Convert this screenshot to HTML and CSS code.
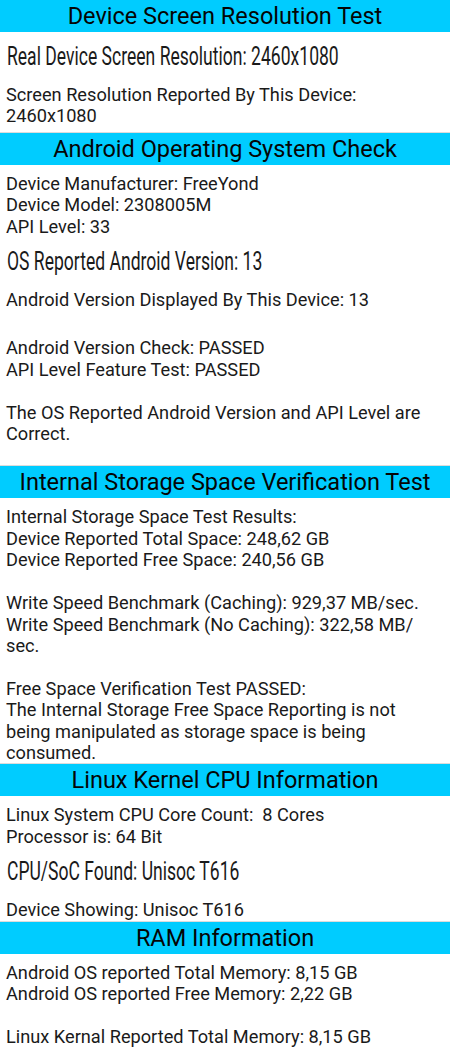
FILE: index.html
```html
<!DOCTYPE html>
<html>
<head>
<title>Device Info</title>
<link rel="stylesheet" href="styles.css">
</head>
<body>
<section class="block first">
    <h2 class="bar">Device Screen Resolution Test</h2>
    <p class="big"><span>Real Device Screen Resolution: 2460x1080</span></p>
    <p class="info shortend">Screen Resolution Reported By This Device:<br>2460x1080</p>
</section>

<section class="block">
    <h2 class="bar">Android Operating System Check</h2>
    <p class="info">Device Manufacturer: FreeYond<br>Device Model: 2308005M<br>API Level: 33</p>
    <p class="big"><span>OS Reported Android Version: 13</span></p>
    <p class="info">Android Version Displayed By This Device: 13</p>
    <p class="info spaced tail">Android Version Check: PASSED<br>API Level Feature Test: PASSED<br><br>The OS Reported Android Version and API Level are<br>Correct.</p>
</section>

<section class="block">
    <h2 class="bar">Internal Storage Space Verification Test</h2>
    <p class="info">Internal Storage Space Test Results:<br>Device Reported Total Space: 248,62 GB<br>Device Reported Free Space: 240,56 GB<br><br>Write Speed Benchmark (Caching): 929,37 MB/sec.<br>Write Speed Benchmark (No Caching): 322,58 MB/<br>sec.<br><br>Free Space Verification Test PASSED:<br>The Internal Storage Free Space Reporting is not<br>being manipulated as storage space is being<br>consumed.</p>
</section>

<section class="block">
    <h2 class="bar">Linux Kernel CPU Information</h2>
    <p class="info">Linux System CPU Core Count:&nbsp; 8 Cores<br>Processor is: 64 Bit</p>
    <p class="big"><span>CPU/SoC Found: Unisoc T616</span></p>
    <p class="info">Device Showing: Unisoc T616</p>
</section>

<section class="block">
    <h2 class="bar">RAM Information</h2>
    <p class="info">Android OS reported Total Memory: 8,15 GB<br>Android OS reported Free Memory: 2,22 GB<br><br>Linux Kernal Reported Total Memory: 8,15 GB</p>
</section>
</body>
</html>
```

FILE: styles.css
```css
body {
  margin: 0;
  background: #ffffff;
  font-family: Roboto, "Noto Sans", sans-serif;
  color: #1a1a1a;
  overflow: hidden;
}

.block {
  border-top: 1px solid #dcdcdc;
}
.block.first {
  border-top: none;
}

.bar {
  margin: 0;
  height: 32px;
  line-height: 32px;
  background-color: #00ccff;
  color: #050505;
  font-size: 23.5px;
  font-weight: normal;
  text-align: center;
  white-space: nowrap;
}

.info {
  margin: 8px 0 0;
  padding-left: 6px;
  font-size: 18.2px;
  line-height: 21.4px;
  white-space: nowrap;
  overflow: hidden;
}

.big {
  margin: 9px 0 0;
  padding-left: 7px;
  font-size: 26px;
  line-height: 30px;
  white-space: nowrap;
  overflow: hidden;
}
.big span {
  display: inline-block;
  max-width: 420px;
  transform: scaleX(0.675);
  transform-origin: left center;
}

.big + .info {
  margin-top: 13px;
}
.spaced {
  margin-top: 27px;
}
.tail {
  margin-bottom: 21px;
}
.shortend {
  margin-bottom: 5px;
}
```
